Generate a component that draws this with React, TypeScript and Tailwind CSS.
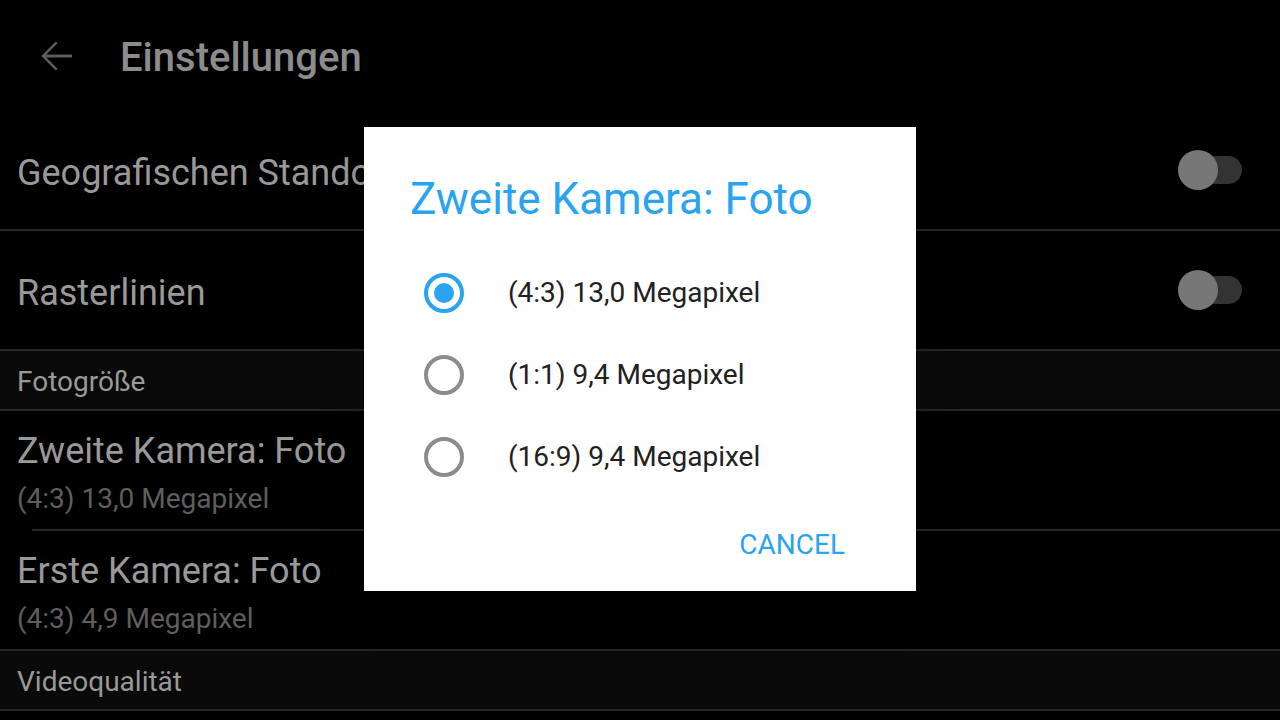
import React from "react";

function Toggle() {
  return (
    <div className="relative h-[40px] w-[64px]">
      <div className="absolute left-[2px] top-[6px] h-[28px] w-[62px] rounded-full bg-[#333333]" />
      <div className="absolute left-0 top-0 h-[40px] w-[40px] rounded-full bg-[#777777]" />
    </div>
  );
}

function Radio({ checked }: { checked: boolean }) {
  if (checked) {
    return (
      <div className="flex h-[40px] w-[40px] items-center justify-center rounded-full border-[4px] border-[#2aa3f0]">
        <div className="h-[20px] w-[20px] rounded-full bg-[#2aa3f0]" />
      </div>
    );
  }
  return <div className="h-[40px] w-[40px] rounded-full border-[4px] border-[#8c8c8c]" />;
}

const options = [
  { label: "(4:3) 13,0 Megapixel", checked: true },
  { label: "(1:1) 9,4 Megapixel", checked: false },
  { label: "(16:9) 9,4 Megapixel", checked: false },
];

export default function App() {
  return (
    <div
      className="relative h-[720px] w-[1280px] overflow-hidden bg-black"
      style={{ fontFamily: "Roboto, 'Liberation Sans', sans-serif" }}
    >
      <header className="flex h-[111px] items-center">
        <svg
          className="ml-[32px] mt-[1px]"
          width="48"
          height="48"
          viewBox="0 0 24 24"
          fill="#5c5c5c"
        >
          <path d="M20 11.25H7.2l5.6-5.6L11.9 4.75 4.65 12l7.25 7.25.9-.9-5.6-5.6H20v-1.5z" />
        </svg>
        <h1 className="ml-[40px] pt-[5px] text-[40px] font-medium leading-[48px] text-[#8c8c8c]">Einstellungen</h1>
      </header>

      <div className="flex h-[120px] items-center justify-between border-b-2 border-[#262626] pl-[17px] pr-[38px]">
        <span className="pt-[5px] text-[36px] text-[#999999]">Geografischen Standort</span>
        <Toggle />
      </div>
      <div className="flex h-[120px] items-center justify-between border-b-2 border-[#262626] pl-[17px] pr-[38px]">
        <span className="pt-[5px] text-[36px] text-[#999999]">Rasterlinien</span>
        <Toggle />
      </div>
      <div className="flex h-[60px] items-center border-b-2 border-[#262626] bg-[#0a0a0a] pl-[17px]">
        <span className="pt-[4px] text-[28px] text-[#999999]">Fotogröße</span>
      </div>
      <div className="flex h-[118px] flex-col pl-[17px] pt-[18px]">
        <span className="text-[36px] leading-[44px] text-[#999999]">Zweite Kamera: Foto</span>
        <span className="mt-[6px] text-[28px] leading-[40px] text-[#5e5e5e]">(4:3) 13,0 Megapixel</span>
      </div>
      <div className="ml-[32px] h-[2px] bg-[#262626]" />
      <div className="flex h-[120px] flex-col border-b-2 border-[#262626] pl-[17px] pt-[18px]">
        <span className="text-[36px] leading-[44px] text-[#999999]">Erste Kamera: Foto</span>
        <span className="mt-[6px] text-[28px] leading-[40px] text-[#5e5e5e]">(4:3) 4,9 Megapixel</span>
      </div>
      <div className="flex h-[60px] items-center border-b-2 border-[#262626] bg-[#0a0a0a] pl-[17px]">
        <span className="pt-[4px] text-[28px] text-[#999999]">Videoqualität</span>
      </div>

      <div className="absolute left-[364px] top-[127px] flex h-[464px] w-[552px] flex-col bg-white shadow-2xl">
        <h2 className="ml-[46px] mt-[48px] text-[44px] leading-[48px] text-[#2aa3f0]">Zweite Kamera: Foto</h2>
        <div className="mt-[29px] flex flex-col">
          {options.map((o) => (
            <div key={o.label} className="flex h-[82px] items-center pl-[60px]">
              <Radio checked={o.checked} />
              <span className="ml-[44px] text-[28px] text-[#212121]">{o.label}</span>
            </div>
          ))}
        </div>
        <div className="mt-auto mb-[30px] flex justify-end pr-[71px]">
          <span className="text-[28px] leading-[32px] text-[#2aa3f0]">CANCEL</span>
        </div>
      </div>
    </div>
  );
}
